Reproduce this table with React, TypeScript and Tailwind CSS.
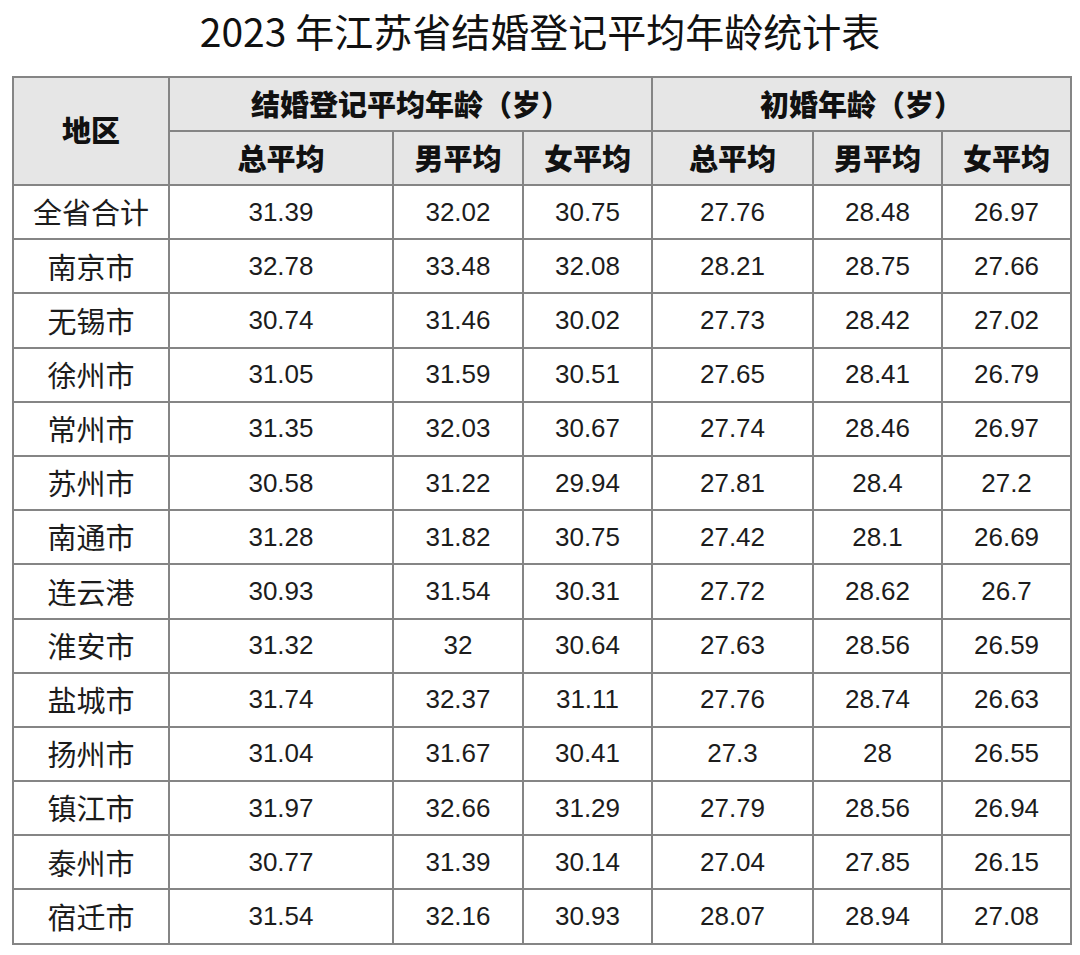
const rows: [string, string, string, string, string, string, string][] = [
  ["全省合计", "31.39", "32.02", "30.75", "27.76", "28.48", "26.97"],
  ["南京市", "32.78", "33.48", "32.08", "28.21", "28.75", "27.66"],
  ["无锡市", "30.74", "31.46", "30.02", "27.73", "28.42", "27.02"],
  ["徐州市", "31.05", "31.59", "30.51", "27.65", "28.41", "26.79"],
  ["常州市", "31.35", "32.03", "30.67", "27.74", "28.46", "26.97"],
  ["苏州市", "30.58", "31.22", "29.94", "27.81", "28.4", "27.2"],
  ["南通市", "31.28", "31.82", "30.75", "27.42", "28.1", "26.69"],
  ["连云港", "30.93", "31.54", "30.31", "27.72", "28.62", "26.7"],
  ["淮安市", "31.32", "32", "30.64", "27.63", "28.56", "26.59"],
  ["盐城市", "31.74", "32.37", "31.11", "27.76", "28.74", "26.63"],
  ["扬州市", "31.04", "31.67", "30.41", "27.3", "28", "26.55"],
  ["镇江市", "31.97", "32.66", "31.29", "27.79", "28.56", "26.94"],
  ["泰州市", "30.77", "31.39", "30.14", "27.04", "27.85", "26.15"],
  ["宿迁市", "31.54", "32.16", "30.93", "28.07", "28.94", "27.08"],
];

const cjk = "font-['Noto_Sans_CJK_SC','Noto_Sans',sans-serif]";
const th = `border-2 border-[#858585] bg-[#e6e6e6] text-[29px] font-black text-[#111] ${cjk}`;
const td = "border-2 border-[#858585] text-[26px] text-[#1c1c1c] font-['Liberation_Sans',Arial,sans-serif]";

export default function App() {
  return (
    <div className="w-[1080px] h-[955px] bg-white overflow-hidden">
      <h1
        className={`pt-[5px] text-center text-[39px] leading-[50px] font-normal text-[#111] ${cjk}`}
      >
        2023 年江苏省结婚登记平均年龄统计表
      </h1>
      <table className="ml-[12px] mt-[21px] w-[1058px] table-fixed border-collapse">
        <colgroup>
          <col className="w-[156px]" />
          <col className="w-[224px]" />
          <col className="w-[130px]" />
          <col className="w-[129px]" />
          <col className="w-[161px]" />
          <col className="w-[129px]" />
          <col className="w-[129px]" />
        </colgroup>
        <thead>
          <tr className="h-[54px]">
            <th rowSpan={2} className={`${th} pb-[2px]`}>
              地区
            </th>
            <th colSpan={3} className={th}>
              结婚登记平均年龄（岁）
            </th>
            <th colSpan={3} className={th}>
              初婚年龄（岁）
            </th>
          </tr>
          <tr className="h-[54px]">
            {["总平均", "男平均", "女平均", "总平均", "男平均", "女平均"].map((h, i) => (
              <th key={i} className={th}>
                {h}
              </th>
            ))}
          </tr>
        </thead>
        <tbody>
          {rows.map((r) => (
            <tr key={r[0]} className="h-[54.2px]">
              <td className={`border-2 border-[#858585] text-center text-[29px] text-[#1c1c1c] ${cjk}`}>
                {r[0]}
              </td>
              {r.slice(1).map((v, i) => (
                <td key={i} className={`${td} text-center`}>
                  {v}
                </td>
              ))}
            </tr>
          ))}
        </tbody>
      </table>
    </div>
  );
}
